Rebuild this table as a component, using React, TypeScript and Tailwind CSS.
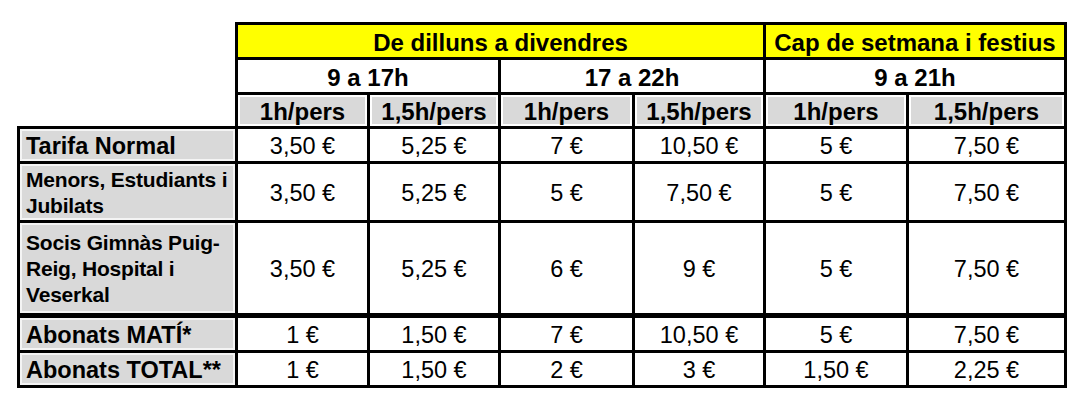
type Row = {
  label: React.ReactNode;
  multi?: boolean;
  h: string;
  top: string;
  values: string[];
};

const rows: Row[] = [
  {
    label: "Tarifa Normal",
    h: "h-[35px]",
    top: "border-t-[3px]",
    values: ["3,50 €", "5,25 €", "7 €", "10,50 €", "5 €", "7,50 €"],
  },
  {
    label: (
      <>
        Menors, Estudiants i<br />
        Jubilats
      </>
    ),
    multi: true,
    h: "h-[59px]",
    top: "border-t-[3px]",
    values: ["3,50 €", "5,25 €", "5 €", "7,50 €", "5 €", "7,50 €"],
  },
  {
    label: (
      <>
        Socis Gimnàs Puig-
        <br />
        Reig, Hospital i<br />
        Veserkal
      </>
    ),
    multi: true,
    h: "h-[94px]",
    top: "border-t-[3px]",
    values: ["3,50 €", "5,25 €", "6 €", "9 €", "5 €", "7,50 €"],
  },
  {
    label: "Abonats MATÍ*",
    h: "h-[36px]",
    top: "border-t-[5px]",
    values: ["1 €", "1,50 €", "7 €", "10,50 €", "5 €", "7,50 €"],
  },
  {
    label: "Abonats TOTAL**",
    h: "h-[35px]",
    top: "border-t-[3px]",
    values: ["1 €", "1,50 €", "2 €", "3 €", "1,50 €", "2,25 €"],
  },
];

const perHour = ["1h/pers", "1,5h/pers", "1h/pers", "1,5h/pers", "1h/pers", "1,5h/pers"];

export default function App() {
  return (
    <div className="w-[1080px] h-[406px] bg-white pt-[22px] pl-[17px] font-['Liberation_Sans',Arial,sans-serif] text-black">
      <table className="table-fixed border-collapse w-[1047px]">
        <colgroup>
          <col className="w-[218px]" />
          <col className="w-[132px]" />
          <col className="w-[131px]" />
          <col className="w-[134px]" />
          <col className="w-[131px]" />
          <col className="w-[143px]" />
          <col className="w-[158px]" />
        </colgroup>
        <thead>
          <tr>
            <td rowSpan={3} className="border-0 p-0" />
            <th
              colSpan={4}
              className="h-[35px] border-[3px] border-black bg-[#ffff00] pt-[3px] text-center text-[24px] font-bold leading-none"
            >
              De dilluns a divendres
            </th>
            <th
              colSpan={2}
              className="h-[35px] border-[3px] border-black bg-[#ffff00] pt-[3px] text-center text-[24px] font-bold leading-none whitespace-nowrap"
            >
              Cap de setmana i festius
            </th>
          </tr>
          <tr>
            <th colSpan={2} className="h-[35px] border-[3px] border-black pt-[3px] text-center text-[24px] font-bold leading-none">
              9 a 17h
            </th>
            <th colSpan={2} className="h-[35px] border-[3px] border-black pt-[3px] text-center text-[24px] font-bold leading-none">
              17 a 22h
            </th>
            <th colSpan={2} className="h-[35px] border-[3px] border-black pt-[3px] text-center text-[24px] font-bold leading-none">
              9 a 21h
            </th>
          </tr>
          <tr>
            {perHour.map((p, i) => (
              <th
                key={i}
                className="h-[34px] border-[3px] border-black bg-[#d9d9d9] shadow-[inset_0_0_0_2px_#ffffff] pt-[3px] text-center text-[24px] font-bold leading-none"
              >
                {p}
              </th>
            ))}
          </tr>
        </thead>
        <tbody>
          {rows.map((r, i) => (
            <tr key={i}>
              <td
                className={
                  r.h +
                  " " +
                  r.top +
                  " border-x-[3px] border-b-[3px] border-black bg-[#d9d9d9] shadow-[inset_0_0_0_2px_#f4f4f4] pl-[6px] pr-0 text-left font-bold align-middle whitespace-nowrap overflow-hidden " +
                  (r.multi ? "text-[21px] leading-[26px] pt-[1px] tracking-[-0.2px]" : "text-[23.5px] leading-none pt-[3px]")
                }
              >
                {r.label}
              </td>
              {r.values.map((v, j) => (
                <td
                  key={j}
                  className={
                    r.top +
                    " border-x-[3px] border-b-[3px] border-black pt-[3px] text-center text-[23.5px] leading-none align-middle whitespace-nowrap"
                  }
                >
                  {v}
                </td>
              ))}
            </tr>
          ))}
        </tbody>
      </table>
    </div>
  );
}
